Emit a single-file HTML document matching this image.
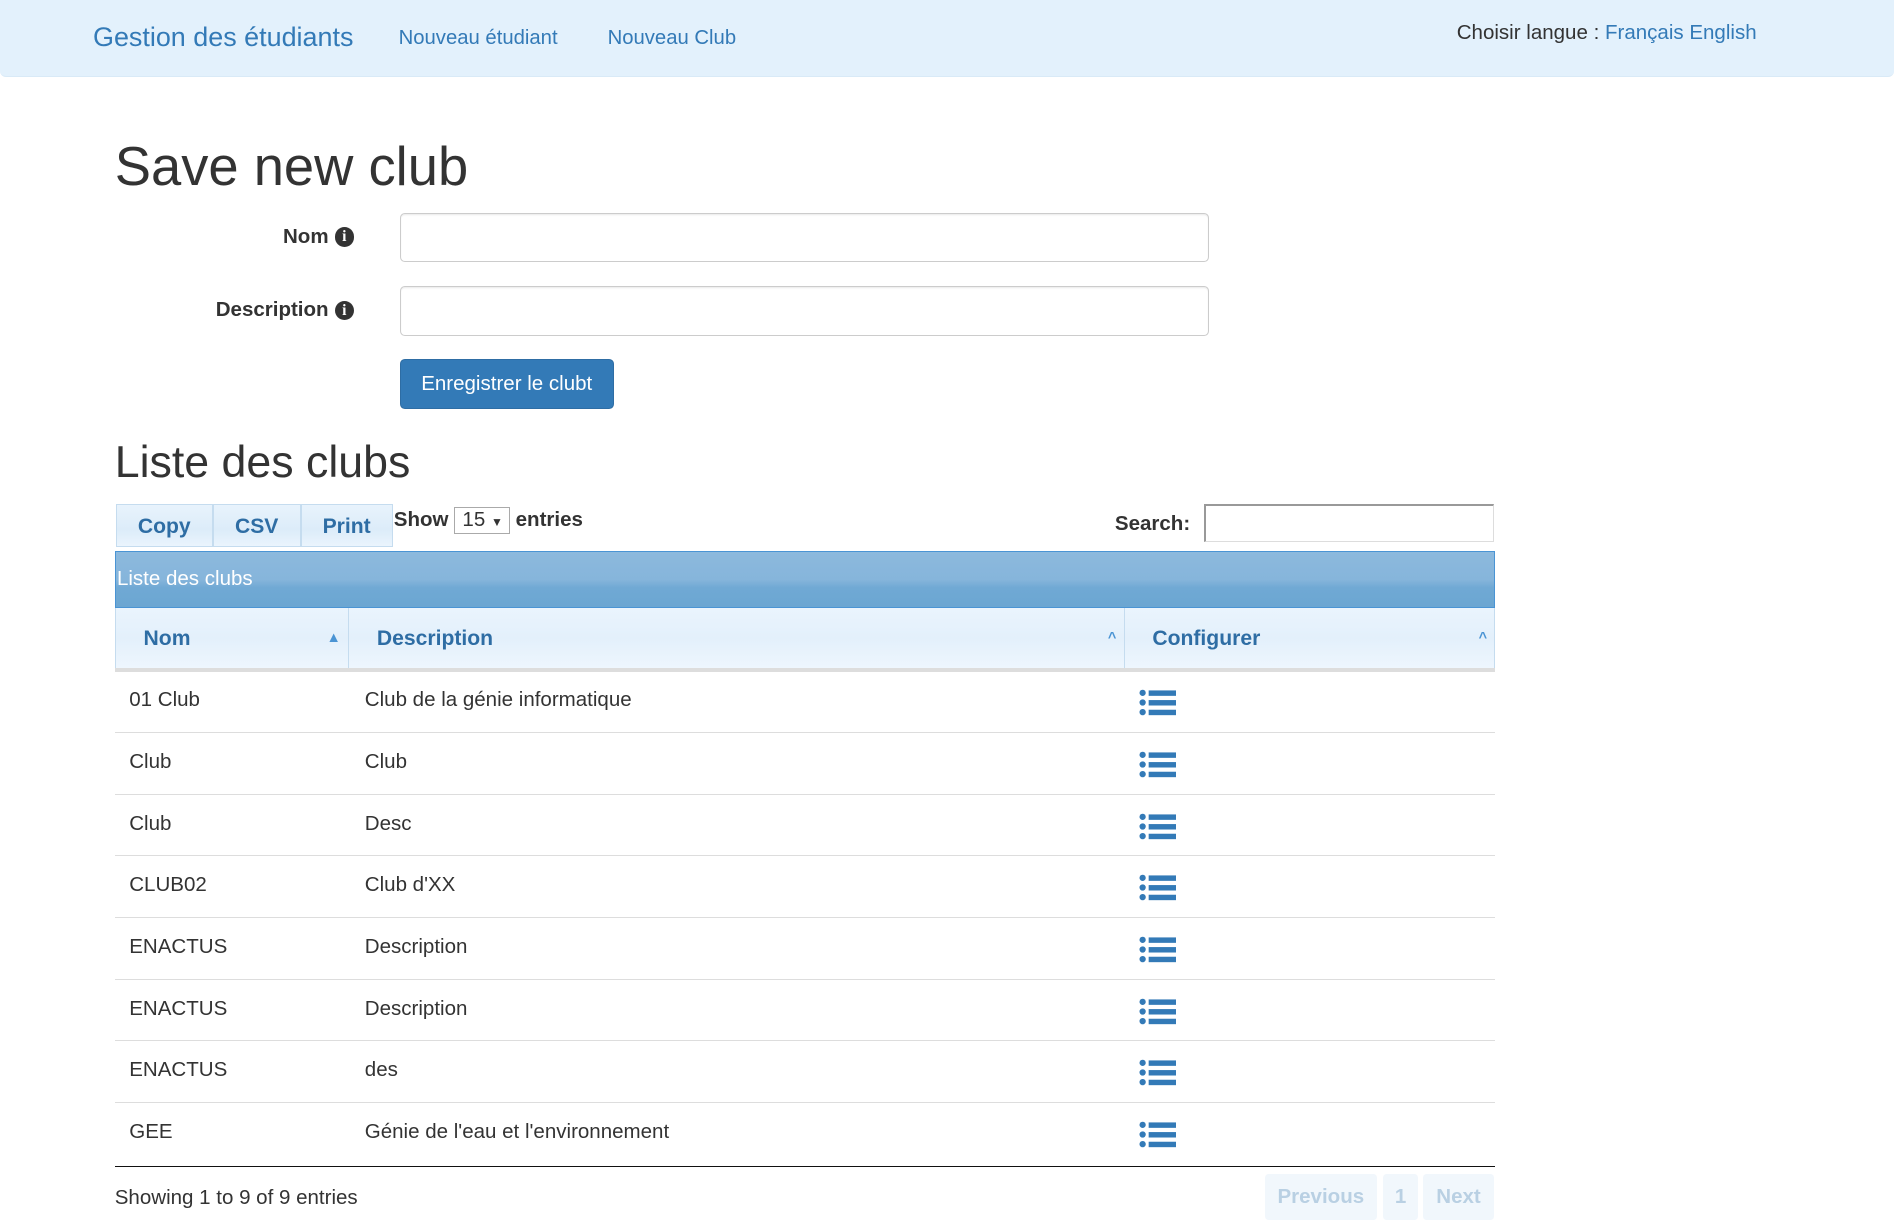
<!DOCTYPE html>
<html><head><meta charset="utf-8">
<style>
html{zoom:1.2079}
*{box-sizing:border-box}
body{margin:0;width:1568px;height:1010px;overflow:hidden;font-family:"Liberation Sans",Arial,sans-serif;color:#333;font-size:17px;background:#fff;position:relative}
.a{position:absolute;white-space:nowrap}
.nav{position:absolute;left:0;top:0;width:1568px;height:64px;background:#e3f1fc;border-radius:0 0 5px 5px;border-bottom:1px solid #d9eaf7}
.link{color:#337ab7}
.input{position:absolute;border:1px solid #ccc;border-radius:4px;box-shadow:inset 0 1px 1px rgba(0,0,0,.075);background:#fff}
.info{display:inline-block;width:16px;height:16px;border-radius:50%;background:#333;color:#fff;font-family:"Liberation Serif",serif;font-weight:bold;font-size:13px;text-align:center;line-height:16px;vertical-align:1px;margin-left:5px}
.btn{position:absolute;left:331px;top:297px;width:177px;height:42px;background:#337ab7;border:1px solid #2e6da4;border-radius:4px;color:#fff;font-size:17px;text-align:center;line-height:40px}
.tb{position:absolute;top:417px;height:36px;border:1px solid #c5dcef;background:linear-gradient(#e8f3fc,#dcecf9 60%,#eaf4fd);color:#2e6da4;font-weight:bold;font-size:17.5px;text-align:center;line-height:36px}
.cap{position:absolute;left:95px;top:456px;width:1143px;height:47px;border:1px solid #4a94d4;background:linear-gradient(#8cb9dd,#86b5db 50%,#70a9d4 65%,#6ba6d2);color:#fff;font-size:17px;padding:13px 0 0 1px}
.th{position:absolute;top:503px;height:51px;background:linear-gradient(#eaf4fd,#e3f0fb 50%,#eef6fe);border-right:1px solid #c5dcef;color:#2e6da4;font-weight:bold;font-size:17.5px;line-height:51px;padding-left:23px}
.th span{position:absolute;right:6px;top:0;font-size:12px;color:#4a94d4}
.row{position:absolute;left:95px;width:1143px;height:51px;border-bottom:1px solid #ddd;font-size:17px}
.row div{position:absolute;top:14px}
.ic{position:absolute;left:848px;top:14px;width:31px;height:24px}
.pg{position:absolute;top:972px;height:38px;background:#f1f7fc;border-radius:3px;color:#b9d0e3;font-weight:bold;font-size:17px;text-align:center;line-height:38px}
</style></head><body>
<div class="nav"></div>
<div class="a link" style="left:77px;top:18px;font-size:22.3px">Gestion des étudiants</div>
<div class="a link" style="left:330px;top:22px;font-size:16.8px">Nouveau étudiant</div>
<div class="a link" style="left:503px;top:22px;font-size:16.8px">Nouveau Club</div>
<div class="a" style="left:1206px;top:17px;font-size:17px">Choisir langue : <span class="link">Français English</span></div>

<div class="a" style="left:95px;top:112px;font-size:45px;color:#333">Save new club</div>
<div class="a" style="right:1275px;top:186px;font-weight:bold;font-size:17px">Nom<span class="info">i</span></div>
<div class="input" style="left:331px;top:176px;width:670px;height:41px"></div>
<div class="a" style="right:1275px;top:247px;font-weight:bold;font-size:17px">Description<span class="info">i</span></div>
<div class="input" style="left:331px;top:237px;width:670px;height:41px"></div>
<div class="btn">Enregistrer le clubt</div>

<div class="a" style="left:95px;top:363px;font-size:37px">Liste des clubs</div>
<div class="tb" style="left:96px;width:80px">Copy</div>
<div class="tb" style="left:176px;width:73px">CSV</div>
<div class="tb" style="left:249px;width:76px">Print</div>
<div class="a" style="left:326px;top:420px;font-weight:bold;font-size:17px">Show <span style="display:inline-block;border:1px solid #aaa;font-weight:normal;padding:0 5px 0 6px;height:22px;line-height:20px">15 <span style="font-size:10px">▼</span></span> entries</div>
<div class="a" style="left:923px;top:424px;font-weight:bold;font-size:17px">Search:</div>
<div class="a" style="left:997px;top:417px;width:240px;height:32px;border:1px solid #ddd;border-top:2px solid #999;border-left:2px solid #999"></div>

<div class="cap">Liste des clubs</div>
<div class="th" style="left:95px;width:194px;border-left:1px solid #c5dcef">Nom<span>▲</span></div>
<div class="th" style="left:289px;width:642px">Description<span>^</span></div>
<div class="th" style="left:931px;width:307px">Configurer<span>^</span></div>
<div class="a" style="left:95px;top:553px;width:1143px;height:3px;background:#ddd"></div>

<div class="row" style="top:556px"><div style="left:12px">01 Club</div><div style="left:207px">Club de la génie informatique</div><svg class="ic" viewBox="0 0 31 24"><g fill="#337ab7"><circle cx="3" cy="4" r="2.6"/><circle cx="3" cy="12" r="2.6"/><circle cx="3" cy="20" r="2.6"/><rect x="8" y="2" width="23" height="4.5"/><rect x="8" y="10" width="23" height="4.5"/><rect x="8" y="18" width="23" height="4.5"/></g></svg></div>
<div class="row" style="top:607px"><div style="left:12px">Club</div><div style="left:207px">Club</div><svg class="ic" viewBox="0 0 31 24"><g fill="#337ab7"><circle cx="3" cy="4" r="2.6"/><circle cx="3" cy="12" r="2.6"/><circle cx="3" cy="20" r="2.6"/><rect x="8" y="2" width="23" height="4.5"/><rect x="8" y="10" width="23" height="4.5"/><rect x="8" y="18" width="23" height="4.5"/></g></svg></div>
<div class="row" style="top:658px"><div style="left:12px">Club</div><div style="left:207px">Desc</div><svg class="ic" viewBox="0 0 31 24"><g fill="#337ab7"><circle cx="3" cy="4" r="2.6"/><circle cx="3" cy="12" r="2.6"/><circle cx="3" cy="20" r="2.6"/><rect x="8" y="2" width="23" height="4.5"/><rect x="8" y="10" width="23" height="4.5"/><rect x="8" y="18" width="23" height="4.5"/></g></svg></div>
<div class="row" style="top:709px"><div style="left:12px">CLUB02</div><div style="left:207px">Club d'XX</div><svg class="ic" viewBox="0 0 31 24"><g fill="#337ab7"><circle cx="3" cy="4" r="2.6"/><circle cx="3" cy="12" r="2.6"/><circle cx="3" cy="20" r="2.6"/><rect x="8" y="2" width="23" height="4.5"/><rect x="8" y="10" width="23" height="4.5"/><rect x="8" y="18" width="23" height="4.5"/></g></svg></div>
<div class="row" style="top:760px"><div style="left:12px">ENACTUS</div><div style="left:207px">Description</div><svg class="ic" viewBox="0 0 31 24"><g fill="#337ab7"><circle cx="3" cy="4" r="2.6"/><circle cx="3" cy="12" r="2.6"/><circle cx="3" cy="20" r="2.6"/><rect x="8" y="2" width="23" height="4.5"/><rect x="8" y="10" width="23" height="4.5"/><rect x="8" y="18" width="23" height="4.5"/></g></svg></div>
<div class="row" style="top:811px"><div style="left:12px">ENACTUS</div><div style="left:207px">Description</div><svg class="ic" viewBox="0 0 31 24"><g fill="#337ab7"><circle cx="3" cy="4" r="2.6"/><circle cx="3" cy="12" r="2.6"/><circle cx="3" cy="20" r="2.6"/><rect x="8" y="2" width="23" height="4.5"/><rect x="8" y="10" width="23" height="4.5"/><rect x="8" y="18" width="23" height="4.5"/></g></svg></div>
<div class="row" style="top:862px"><div style="left:12px">ENACTUS</div><div style="left:207px">des</div><svg class="ic" viewBox="0 0 31 24"><g fill="#337ab7"><circle cx="3" cy="4" r="2.6"/><circle cx="3" cy="12" r="2.6"/><circle cx="3" cy="20" r="2.6"/><rect x="8" y="2" width="23" height="4.5"/><rect x="8" y="10" width="23" height="4.5"/><rect x="8" y="18" width="23" height="4.5"/></g></svg></div>
<div class="row" style="top:913px;border-bottom:1px solid #111;height:53px"><div style="left:12px">GEE</div><div style="left:207px">Génie de l'eau et l'environnement</div><svg class="ic" viewBox="0 0 31 24"><g fill="#337ab7"><circle cx="3" cy="4" r="2.6"/><circle cx="3" cy="12" r="2.6"/><circle cx="3" cy="20" r="2.6"/><rect x="8" y="2" width="23" height="4.5"/><rect x="8" y="10" width="23" height="4.5"/><rect x="8" y="18" width="23" height="4.5"/></g></svg></div>

<div class="a" style="left:95px;top:982px;font-size:17px">Showing 1 to 9 of 9 entries</div>
<div class="pg" style="left:1047px;width:93px">Previous</div>
<div class="pg" style="left:1145px;width:29px">1</div>
<div class="pg" style="left:1178px;width:59px">Next</div>
</body></html>
